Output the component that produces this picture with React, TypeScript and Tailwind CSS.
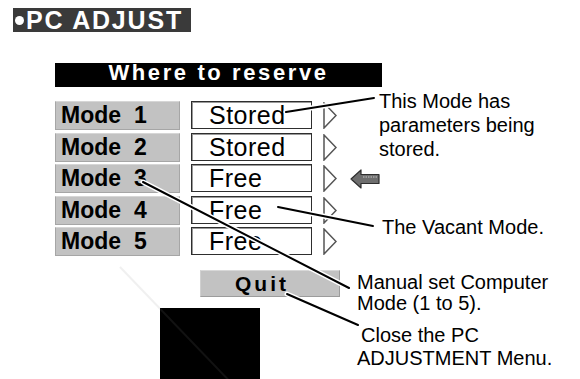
import React from "react";

const rows = [
  { n: "1", value: "Stored" },
  { n: "2", value: "Stored" },
  { n: "3", value: "Free", pointer: true },
  { n: "4", value: "Free" },
  { n: "5", value: "Free" },
];

const leaders = [
  { x1: 286, y1: 112, x2: 374, y2: 98 },
  { x1: 278, y1: 207, x2: 373, y2: 226 },
  { x1: 143, y1: 182, x2: 349, y2: 288 },
  { x1: 287, y1: 294, x2: 358, y2: 325 },
];

function Triangle() {
  return (
    <svg width="14" height="27" viewBox="0 0 14 27" className="shrink-0">
      <polygon points="1,1 13,13.5 1,26" fill="white" stroke="#555" strokeWidth="1.5" />
    </svg>
  );
}

function LeftArrow() {
  return (
    <svg width="30" height="20" viewBox="0 0 30 20" className="shrink-0">
      <polygon
        points="1,10 11,1 11,5.5 29,5.5 29,14.5 11,14.5 11,19"
        fill="#6e6e6e"
        stroke="#2e2e2e"
        strokeWidth="1.2"
        strokeLinejoin="round"
      />
      <line x1="13" y1="8" x2="27" y2="8" stroke="#c8c8c8" strokeWidth="1" strokeDasharray="1.5 1" />
    </svg>
  );
}

function Callout({ className, lines }: { className: string; lines: string[] }) {
  return (
    <div className={`absolute text-[20px] text-black ${className}`}>
      {lines.map((l) => (
        <div key={l} className="whitespace-nowrap">
          {l}
        </div>
      ))}
    </div>
  );
}

export default function App() {
  return (
    <div
      className="relative h-[379px] w-[580px] overflow-hidden bg-white"
      style={{ fontFamily: '"Liberation Sans", Arial, sans-serif' }}
    >
      <div className="pl-[13px] pt-[8px]">
        <div className="flex h-[24px] w-[178px] items-center bg-[#3a3a3a]">
          <span className="ml-[2px] h-[9px] w-[9px] rounded-full bg-white" />
          <span className="ml-[2px] text-[25px] font-bold leading-[24px] tracking-[1.8px] text-white">
            PC ADJUST
          </span>
        </div>
      </div>

      <div className="ml-[55px] mt-[31px] w-[327px]">
        <div className="flex h-[24px] justify-center bg-black">
          <span className="text-[22px] font-bold leading-[20px] tracking-[2.6px] text-white">
            Where to reserve
          </span>
        </div>

        <div className="mt-[14px] flex flex-col gap-[2.5px]">
          {rows.map((r) => (
            <div key={r.n} className="flex h-[29px] items-center">
              <div className="flex h-full w-[125px] shrink-0 items-center border border-[#a6a6a6] border-t-[#d6d6d6] bg-[#c2c2c2] pl-[5px] text-[23px] font-bold leading-[27px] text-black">
                <span>Mode</span>
                <span className="ml-[13px]">{r.n}</span>
              </div>
              <div className="ml-[11px] flex h-[28px] w-[121px] shrink-0 items-center self-start border border-[#2e2e2e] bg-white pl-[17px] text-[25px] leading-[26px] tracking-[0.5px] text-black shadow-[inset_1px_1px_0_#9a9a9a]">
                {r.value}
              </div>
              <div className="ml-[11px]">
                <Triangle />
              </div>
              {r.pointer && (
                <div className="ml-[13px]">
                  <LeftArrow />
                </div>
              )}
            </div>
          ))}
        </div>

        <div className="ml-[145px] mt-[14px] flex h-[27px] w-[140px] items-center border border-[#9c9c9c] border-t-[#d8d8d8] border-l-[#d0d0d0] bg-[#c2c2c2] pl-[34px] text-[21px] font-bold leading-[24px] tracking-[3px] text-black">
          Quit
        </div>

        <div className="ml-[105px] mt-[11px] h-[80px] w-[100px] bg-black" />
      </div>

      <svg className="pointer-events-none absolute inset-0" width="580" height="379">
        <line x1="120" y1="267" x2="240" y2="392" stroke="#888" strokeOpacity="0.13" strokeWidth="2" />
        {leaders.map((l, i) => (
          <g key={i}>
            <line {...l} stroke="white" strokeWidth="5" strokeLinecap="round" />
            <line {...l} stroke="black" strokeWidth="2" strokeLinecap="round" />
          </g>
        ))}
      </svg>

      <Callout className="left-[379px] top-[89px] leading-[24px]" lines={["This Mode has", "parameters being", "stored."]} />
      <Callout className="left-[382px] top-[215px] leading-[24px]" lines={["The Vacant Mode."]} />
      <Callout className="left-[357px] top-[272px] leading-[21px]" lines={["Manual set Computer", "Mode (1 to 5)."]} />
      <div className="absolute left-[357px] top-[324px] text-[20px] leading-[23px] text-black">
        <div className="ml-[4px] whitespace-nowrap">Close the PC</div>
        <div className="whitespace-nowrap">ADJUSTMENT Menu.</div>
      </div>
    </div>
  );
}
